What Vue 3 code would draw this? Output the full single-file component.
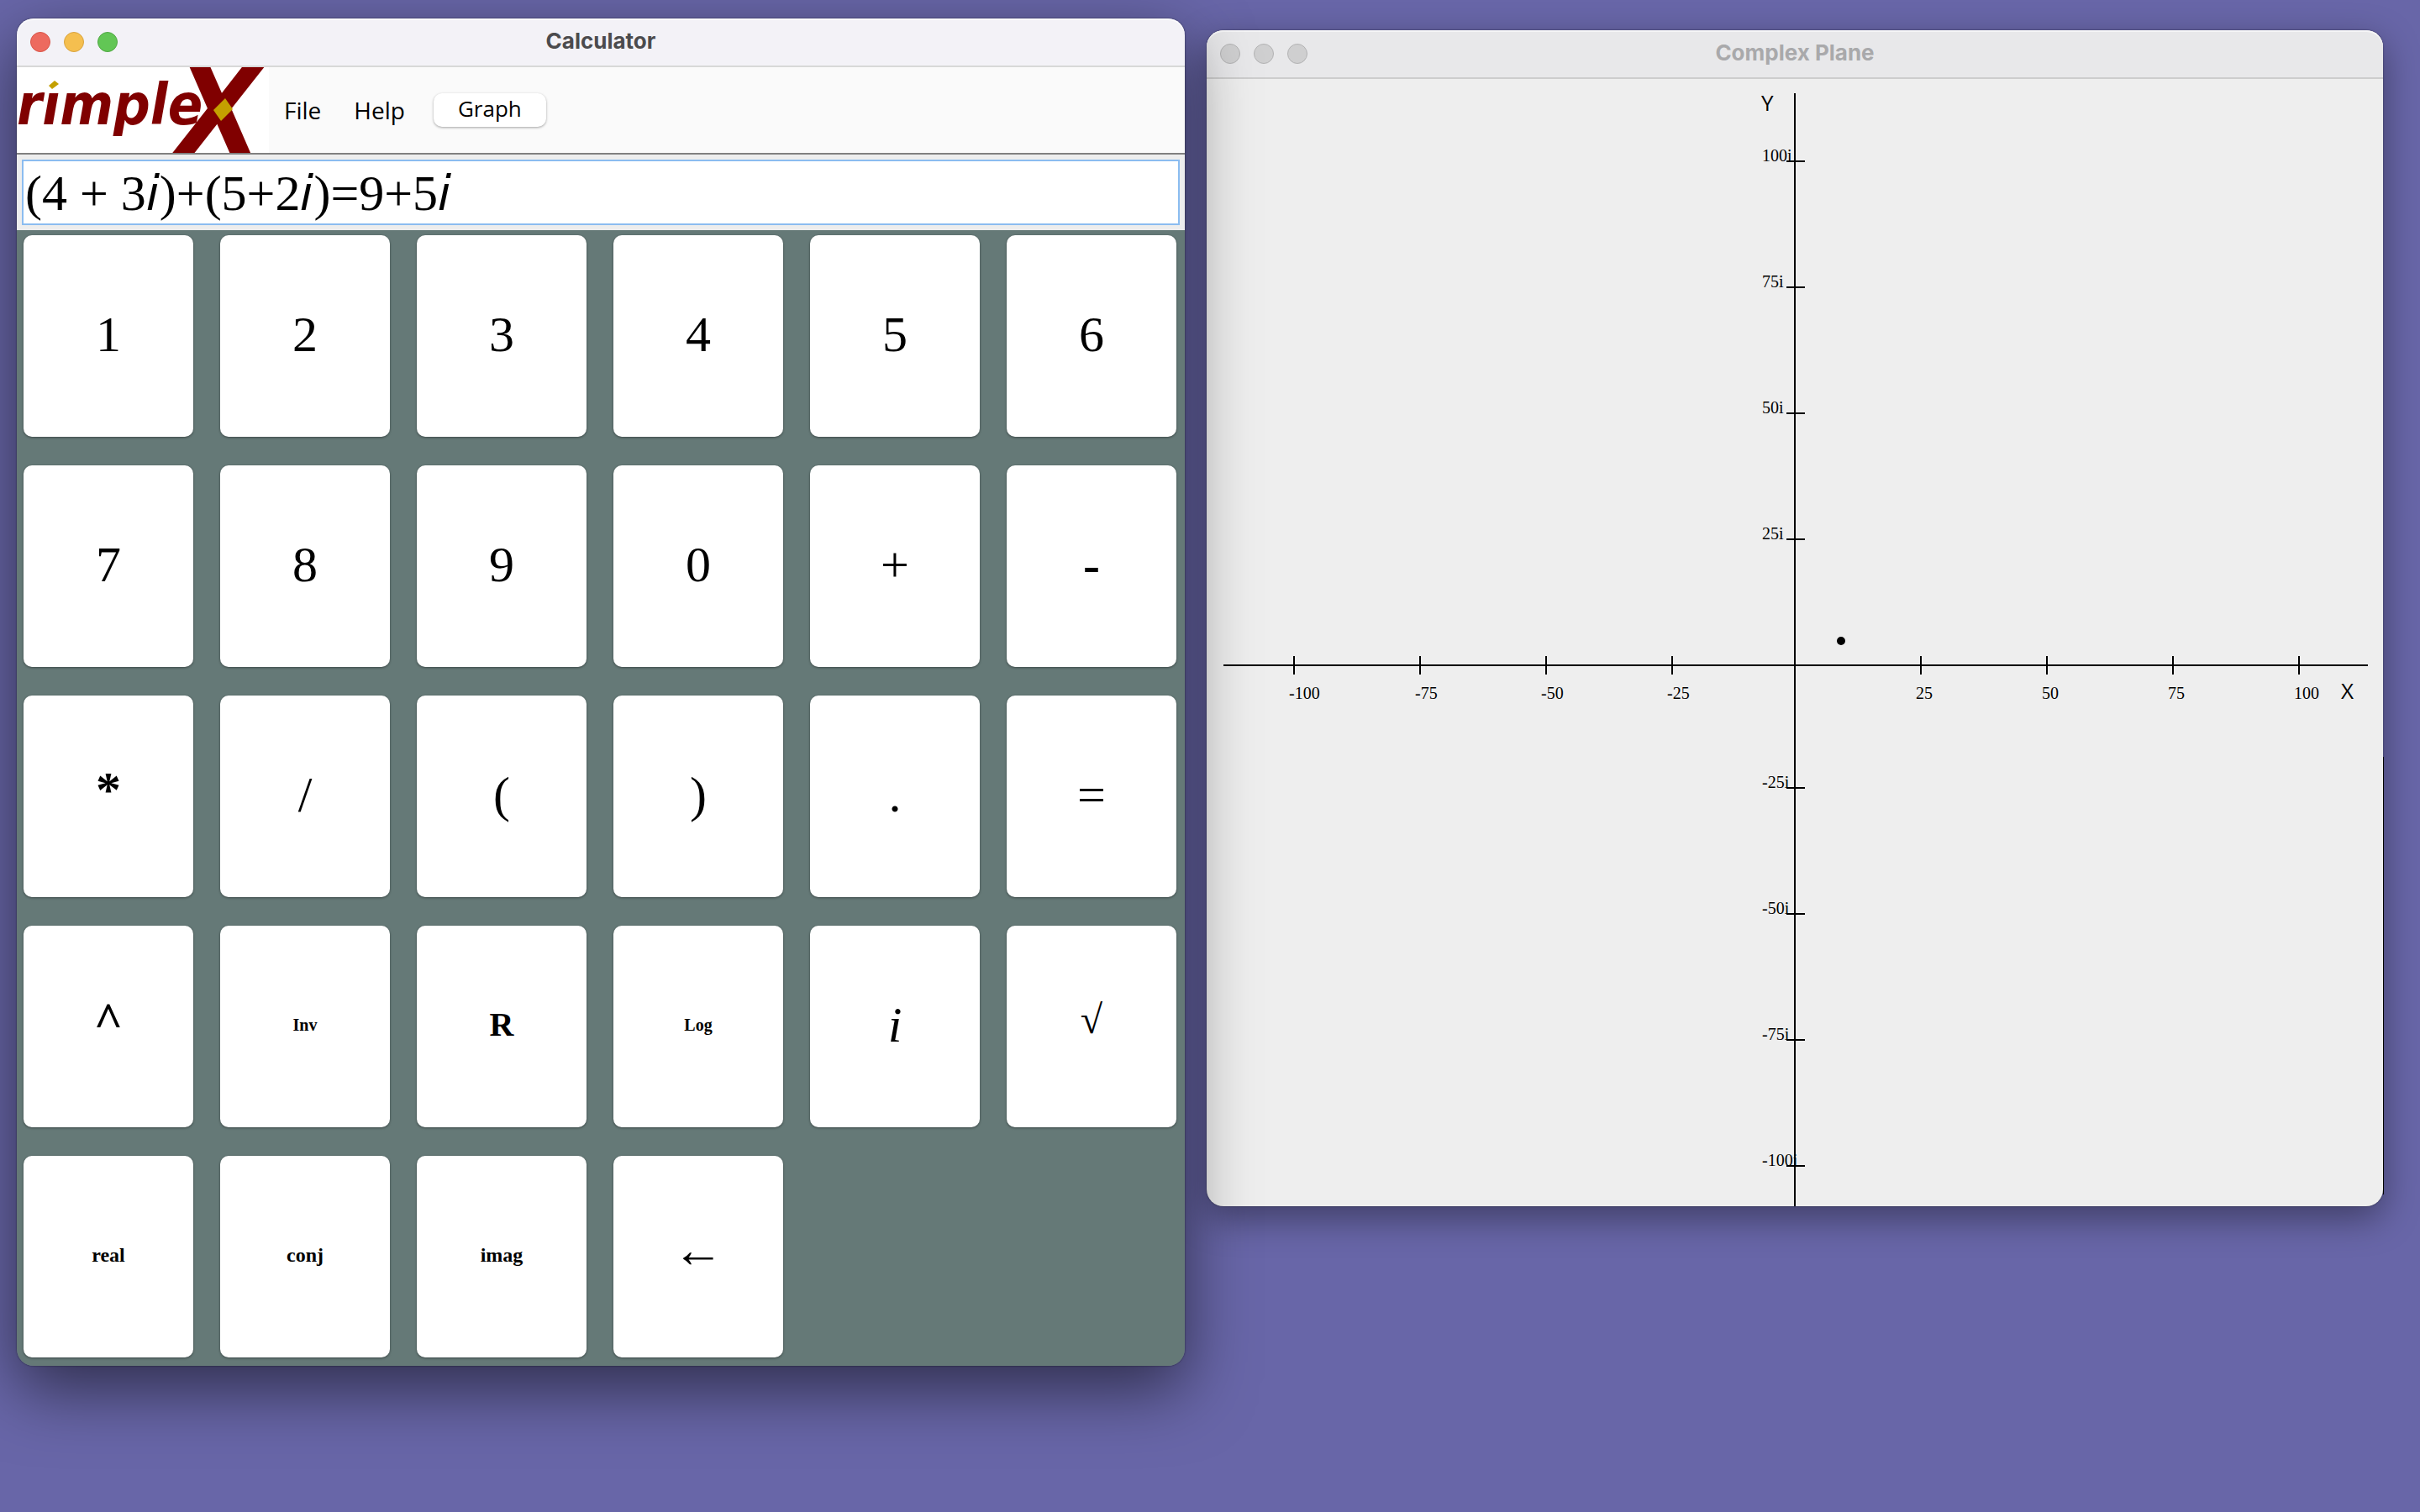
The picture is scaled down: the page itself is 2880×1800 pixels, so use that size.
<script setup>
import { ref } from 'vue'

const display = ref('(4 + 3𝑖)+(5+2𝑖)=9+5𝑖')

const keys = [
  { label: '1' }, { label: '2' }, { label: '3' }, { label: '4' }, { label: '5' }, { label: '6' },
  { label: '7' }, { label: '8' }, { label: '9' }, { label: '0' }, { label: '+' }, { label: '-', kind: 'bold' },
  { label: '*', kind: 'bold raised' }, { label: '/' }, { label: '(' }, { label: ')' }, { label: '.' }, { label: '=' },
  { label: '^', kind: 'bold raised' }, { label: 'Inv', kind: 'tiny' }, { label: 'R', kind: 'medium' },
  { label: 'Log', kind: 'tiny' }, { label: 'i', kind: 'italic' }, { label: '√', kind: 'root raised' },
  { label: 'real', kind: 'small' }, { label: 'conj', kind: 'small' }, { label: 'imag', kind: 'small' },
  { label: '←', kind: 'arrow raised' },
]

const steps = [25, 50, 75, 100]
const unit = 6
const originX = 700
const originY = 698

const xTicks = [
  ...steps.map((v) => ({ value: -v, x: originX + 4 - v * unit })),
  ...steps.map((v) => ({ value: v, x: originX + v * unit })),
]
const yTicks = [
  ...steps.map((v) => ({ value: v, y: originY - v * unit })),
  ...steps.map((v) => ({ value: -v, y: originY - 4 + v * unit })),
]
</script>

<template>
  <main class="desktop">
    <section class="window active">
      <header class="titlebar">
        <div class="lights">
          <button class="light red" aria-label="Close"></button>
          <button class="light yellow" aria-label="Minimize"></button>
          <button class="light green" aria-label="Zoom"></button>
        </div>
        <h1 class="title">Calculator</h1>
      </header>

      <nav class="menubar">
        <svg class="logo" viewBox="0 0 300 102" role="img" aria-label="rimpleX">
          <rect width="300" height="102" fill="#fff" />
          <text x="0" y="68" class="logo-word">rimple</text>
          <rect x="34" y="8" width="22" height="20" fill="#fff" />
          <path d="M45 16 50 20 42 26 38 22Z" fill="#c4a000" />
          <text x="191" y="103" class="logo-x">X</text>
          <path d="M248 37 257 50 243 64 234 51Z" fill="#c4a000" />
        </svg>
        <button class="menu">File</button>
        <button class="menu">Help</button>
        <button class="graph">Graph</button>
      </nav>

      <div class="display">
        <input v-model="display" class="field" type="text" aria-label="Expression" />
      </div>

      <div class="keypad">
        <button v-for="key in keys" :key="key.label" class="key" :class="key.kind">{{ key.label }}</button>
      </div>
    </section>

    <section class="window plane">
      <header class="titlebar">
        <div class="lights">
          <button class="light" aria-label="Close"></button>
          <button class="light" aria-label="Minimize"></button>
          <button class="light" aria-label="Zoom"></button>
        </div>
        <h1 class="title">Complex Plane</h1>
      </header>
      <svg class="plot" viewBox="0 0 1400 1342">
        <g class="axes">
          <line x1="20" :y1="originY" x2="1382" :y2="originY" />
          <line :x1="originX" y1="17" :x2="originX" y2="1342" />
          <line v-for="t in xTicks" :key="t.value" :x1="t.x" y1="687" :x2="t.x" y2="709" />
          <line v-for="t in yTicks" :key="t.value" x1="690" :y1="t.y" x2="712" :y2="t.y" />
        </g>
        <text v-for="t in xTicks" :key="t.value" class="tick" :x="t.x - 6" y="738">{{ t.value }}</text>
        <text v-for="t in yTicks" :key="t.value" class="tick" x="661" :y="t.y">{{ t.value }}i</text>
        <text class="axis" x="660" y="38">Y</text>
        <text class="axis" x="1350" y="738">X</text>
        <circle cx="755" cy="669" r="5" />
      </svg>
    </section>
  </main>
</template>

<style>
body {
  background: #6866a8;
}
</style>

<style scoped>
.desktop {
  box-sizing: border-box;
  min-height: 100vh;
  padding: 22px 44px 0 20px;
  display: flex;
  align-items: flex-start;
  gap: 26px;
  overflow: hidden;
  background: #6866a8;
}

button {
  margin: 0;
  padding: 0;
  border: 0;
  color: #000;
}

.window {
  position: relative;
  min-width: 0;
  border-radius: 20px;
}

.active {
  z-index: 1;
  flex: 1390 1 0;
  box-shadow: 0 0 2px rgba(0, 0, 0, 0.6), 0 28px 80px rgba(0, 0, 0, 0.55);
}

.plane {
  flex: 1400 1 0;
  margin-top: 14px;
  background: #eee;
  box-shadow: 0 0 2px rgba(0, 0, 0, 0.5), 0 14px 44px rgba(0, 0, 0, 0.4);
}

.plane::after {
  content: '';
  position: absolute;
  left: 100%;
  top: 865px;
  bottom: 14px;
  width: 1px;
  background: #000;
}

.titlebar {
  height: 56px;
  display: grid;
  grid-template-columns: 1fr auto 1fr;
  align-items: center;
  padding: 0 16px;
  border-bottom: 2px solid #d8d8d8;
  border-radius: 20px 20px 0 0;
  background: #f3f2f7;
  box-shadow: inset 0 2px 0 rgba(255, 255, 255, 0.6);
}

.plane .titlebar {
  border-bottom-color: #cdcdcd;
  background: #e8e8ea;
}

.title {
  margin: 0;
  padding-bottom: 2px;
  font: 700 26px/32px Inter, "Liberation Sans", sans-serif;
  color: #4b4b4d;
}

.plane .title {
  color: #a9a9ab;
}

.lights {
  display: flex;
  gap: 16px;
}

.light {
  width: 24px;
  height: 24px;
  border-radius: 50%;
  border: 1px solid #b3b3b4;
  background: #cfcfd0;
}

.red {
  border-color: #d95549;
  background: #ed6a5f;
}

.yellow {
  border-color: #d9a440;
  background: #f5bf4f;
}

.green {
  border-color: #50a844;
  background: #62c655;
}

.menubar {
  height: 102px;
  display: flex;
  align-items: center;
  border-bottom: 2px solid #808080;
  background: #fafafa;
  font-family: "Open Sans", "Noto Sans", sans-serif;
}

.logo {
  width: 300px;
  height: 102px;
  flex: none;
}

.logo text {
  font-family: "DejaVu Sans Condensed", "DejaVu Sans", sans-serif;
  font-weight: 700;
  font-style: italic;
  fill: #800000;
}

.logo-word {
  font-size: 68px;
}

.logo-x {
  font-size: 144px;
}

.menu {
  margin-left: 18px;
  margin-right: 21px;
  background: none;
  font: 28px/40px "Open Sans", "Noto Sans", sans-serif;
}

.graph {
  margin-left: 13px;
  width: 134px;
  height: 40px;
  padding-bottom: 4px;
  border-radius: 10px;
  background: #fff;
  box-shadow: 0 1px 3px rgba(0, 0, 0, 0.35);
  font: 26px/32px "Open Sans", "Noto Sans", sans-serif;
}

.display {
  padding: 6px;
  background: #ededed;
}

.field {
  display: block;
  box-sizing: border-box;
  width: 100%;
  height: 78px;
  padding: 2px 2px 0;
  border: 2px solid #8bbcf0;
  outline: 0;
  background: #fff;
  color: #000;
  font: 60px/72px "Liberation Serif", "DejaVu Sans", serif;
}

.keypad {
  display: grid;
  grid-template-columns: repeat(6, 1fr);
  grid-auto-rows: 240px;
  gap: 34px 32px;
  padding: 6px 10px 10px 8px;
  border-radius: 0 0 20px 20px;
  background: #657977;
}

.key {
  padding-bottom: 4px;
  border-radius: 10px;
  background: #fff;
  box-shadow: 0 1px 3px rgba(0, 0, 0, 0.4);
  font: 60px/68px "Liberation Serif", serif;
}

.raised {
  padding-bottom: 16px;
}

.bold {
  font-weight: 700;
}

.italic {
  font-style: italic;
}

.tiny {
  font-size: 20px;
  font-weight: 700;
}

.small {
  font-size: 24px;
  font-weight: 700;
}

.medium {
  font-size: 40px;
  font-weight: 700;
}

.root {
  font-size: 48px;
}

.arrow {
  font-size: 60px;
}

.plot {
  display: block;
  width: 100%;
  height: auto;
}

.axes line {
  stroke: #000;
  stroke-width: 2;
}

.tick {
  font: 20px "Liberation Serif", serif;
}

.axis {
  font: 26px "Open Sans", "Noto Sans", sans-serif;
}
</style>
